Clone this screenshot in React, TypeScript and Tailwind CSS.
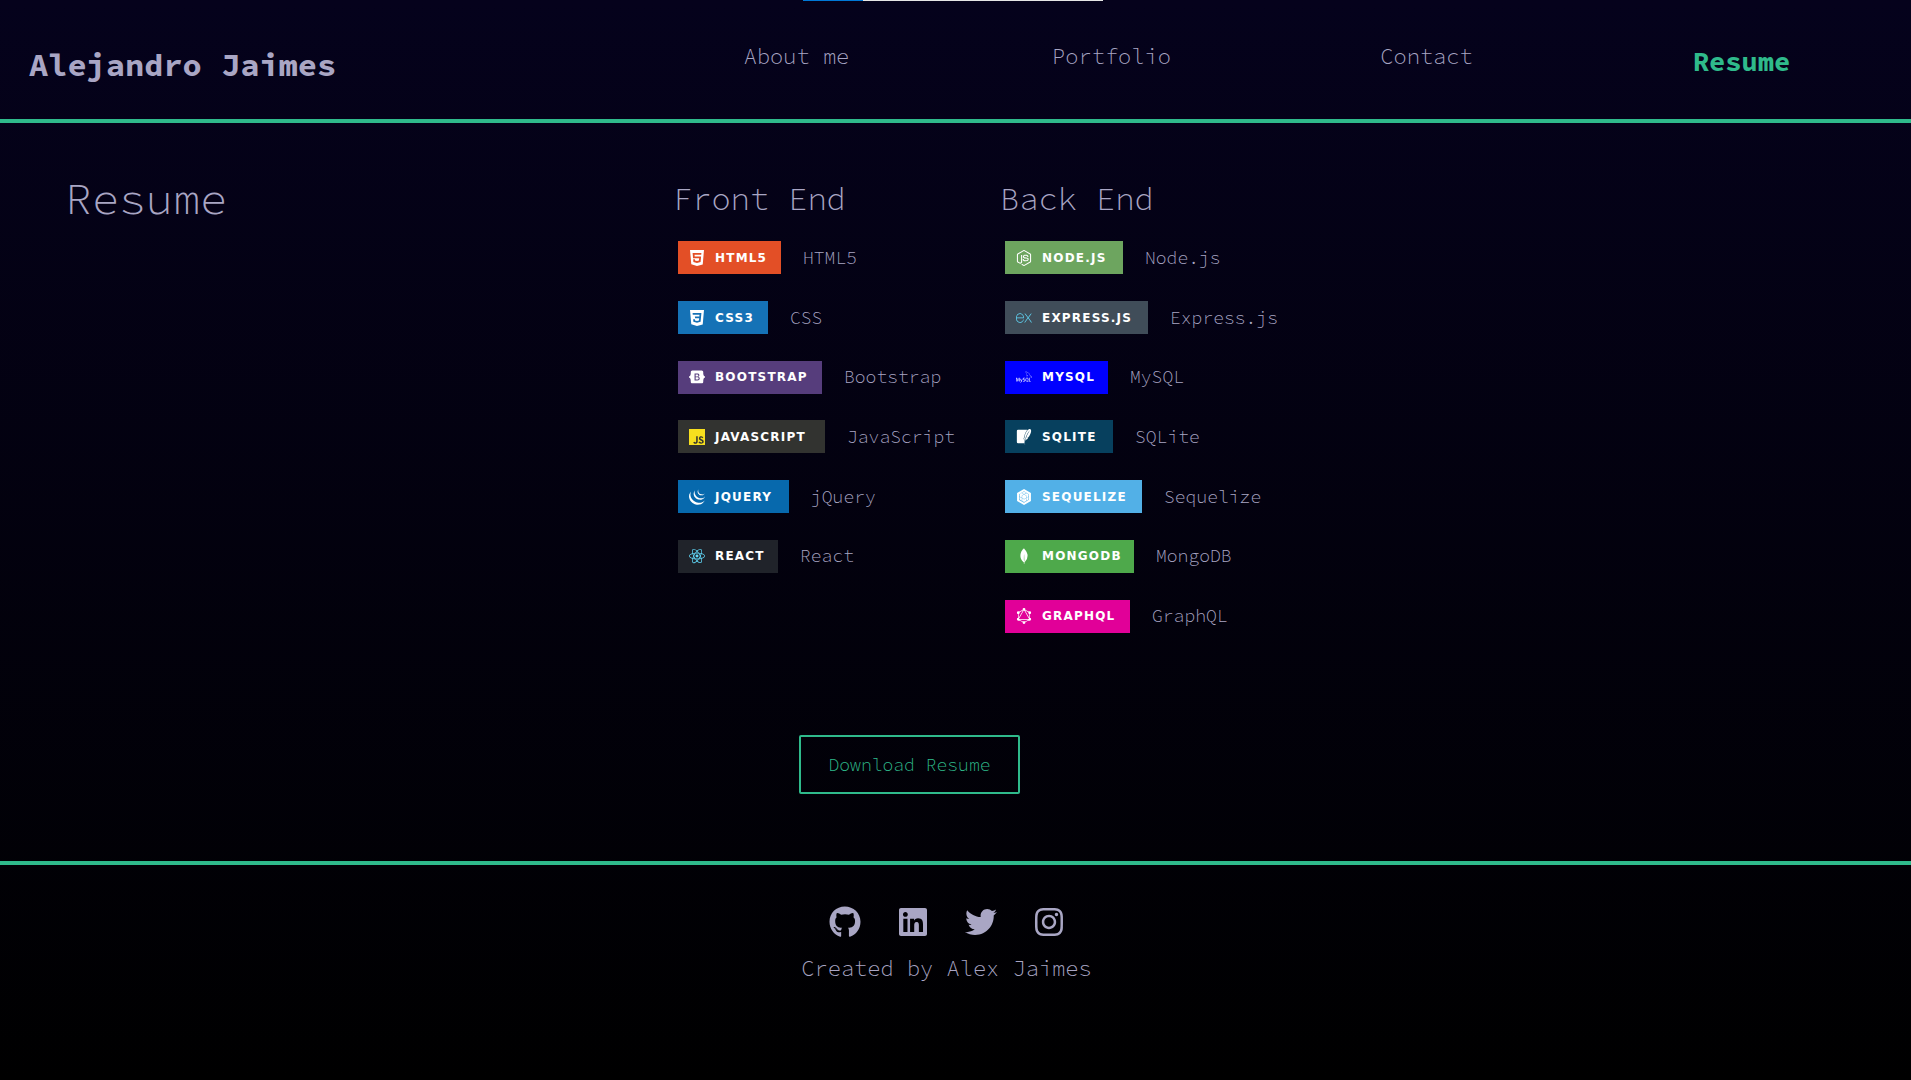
import { FaGithub, FaInstagram, FaLinkedin, FaTwitter } from 'react-icons/fa';
import {
  SiBootstrap,
  SiCss3,
  SiExpress,
  SiGraphql,
  SiHtml5,
  SiJavascript,
  SiJquery,
  SiMongodb,
  SiMysql,
  SiNodedotjs,
  SiReact,
  SiSequelize,
  SiSqlite,
} from 'react-icons/si';
import type { IconType } from 'react-icons';

type Skill = { badge: string; label: string; icon: IconType; box: string; tint: string };

const frontEnd: Skill[] = [
  { badge: 'HTML5', label: 'HTML5', icon: SiHtml5, box: 'w-[103px] bg-[#e34f26]', tint: 'text-white' },
  { badge: 'CSS3', label: 'CSS', icon: SiCss3, box: 'w-[90px] bg-[#1572b6]', tint: 'text-white' },
  { badge: 'BOOTSTRAP', label: 'Bootstrap', icon: SiBootstrap, box: 'w-[144px] bg-[#563d7c]', tint: 'text-white' },
  { badge: 'JAVASCRIPT', label: 'JavaScript', icon: SiJavascript, box: 'w-[147px] bg-[#323330]', tint: 'text-[#f7df1e]' },
  { badge: 'JQUERY', label: 'jQuery', icon: SiJquery, box: 'w-[111px] bg-[#0769ad]', tint: 'text-white' },
  { badge: 'REACT', label: 'React', icon: SiReact, box: 'w-[100px] bg-[#20232a]', tint: 'text-[#61dafb]' },
];

const backEnd: Skill[] = [
  { badge: 'NODE.JS', label: 'Node.js', icon: SiNodedotjs, box: 'w-[118px] bg-[#6da55f]', tint: 'text-white' },
  { badge: 'EXPRESS.JS', label: 'Express.js', icon: SiExpress, box: 'w-[143px] bg-[#404d59]', tint: 'text-[#61dafb]' },
  { badge: 'MYSQL', label: 'MySQL', icon: SiMysql, box: 'w-[103px] bg-[#0000ff]', tint: 'text-white' },
  { badge: 'SQLITE', label: 'SQLite', icon: SiSqlite, box: 'w-[108px] bg-[#07405e]', tint: 'text-white' },
  { badge: 'SEQUELIZE', label: 'Sequelize', icon: SiSequelize, box: 'w-[137px] bg-[#52b0e7]', tint: 'text-white' },
  { badge: 'MONGODB', label: 'MongoDB', icon: SiMongodb, box: 'w-[129px] bg-[#4ea94b]', tint: 'text-white' },
  { badge: 'GRAPHQL', label: 'GraphQL', icon: SiGraphql, box: 'w-[125px] bg-[#e10098]', tint: 'text-white' },
];

function SkillList({ title, skills }: { title: string; skills: Skill[] }) {
  return (
    <div className="pt-[7px]">
      <h2 className="text-[32px] leading-10">{title}</h2>
      <ul className="mt-[9px] grid h-[418px] grid-rows-7 pl-[5px]">
        {skills.map(({ badge, label, icon: Icon, box, tint }) => (
          <li key={badge} className="flex items-center gap-[22px] text-lg">
            <span className={`flex h-[33px] shrink-0 items-center gap-[10px] pl-[11px] ${box}`}>
              <Icon className={`size-4 shrink-0 ${tint}`} aria-hidden />
              <span className="font-['Verdana','DejaVu_Sans',sans-serif] text-xs font-bold tracking-widest text-white">
                {badge}
              </span>
            </span>
            {label}
          </li>
        ))}
      </ul>
    </div>
  );
}

const links = ['About me', 'Portfolio', 'Contact', 'Resume'];

const socials = [
  { name: 'GitHub', icon: FaGithub },
  { name: 'LinkedIn', icon: FaLinkedin },
  { name: 'Twitter', icon: FaTwitter },
  { name: 'Instagram', icon: FaInstagram },
];

export default function App() {
  return (
    <div className="relative flex min-h-screen flex-col bg-linear-to-b/srgb from-[#05021c] to-black font-['Source_Code_Pro','Liberation_Mono',monospace] font-light text-[#a9a6c4]">
      <div className="absolute top-0 left-[42%] flex h-px w-[300px] bg-[#e6e6e6]">
        <div className="w-1/5 bg-[#0078d7]" />
      </div>

      <header className="grid grid-cols-[610fr_1260fr] items-start border-b-4 border-[#2fba8b] pt-10 pr-3 pb-[34px] pl-[29px]">
        <p className="pt-[5px] text-[32px] leading-10 font-bold">Alejandro Jaimes</p>
        <nav>
          <ul className="grid grid-cols-4 text-center">
            {links.map((link) => (
              <li key={link}>
                {link === 'Resume' ? (
                  <a
                    href="#resume"
                    aria-current="page"
                    className="block text-[27px] leading-[42px] font-bold text-[#2fba8b]"
                  >
                    {link}
                  </a>
                ) : (
                  <a href="#" className="block text-[22px] leading-[33px]">
                    {link}
                  </a>
                )}
              </li>
            ))}
          </ul>
        </nav>
      </header>

      <main id="resume" className="pt-[49px] pb-[67px]">
        <div className="grid grid-cols-[673fr_327fr_911fr]">
          <h1 className="pl-[65px] text-[45px] leading-[52px]">Resume</h1>
          <SkillList title="Front End" skills={frontEnd} />
          <SkillList title="Back End" skills={backEnd} />
          <div className="col-start-2 col-end-4 pt-[89px] pl-[126px]">
            <button
              type="button"
              className="h-[59px] w-[221px] rounded-xs border-2 border-[#2fba8b] text-lg text-[#2fba8b]"
            >
              Download Resume
            </button>
          </div>
        </div>
      </main>

      <footer className="flex flex-col items-center border-t-4 border-[#2fba8b] pt-[41px] pr-[18px]">
        <div className="flex gap-9 text-[32px]">
          {socials.map(({ name, icon: Icon }) => (
            <a key={name} href="#" aria-label={name}>
              <Icon />
            </a>
          ))}
        </div>
        <p className="mt-[14px] text-[22px] leading-[33px]">Created by Alex Jaimes</p>
      </footer>
    </div>
  );
}
